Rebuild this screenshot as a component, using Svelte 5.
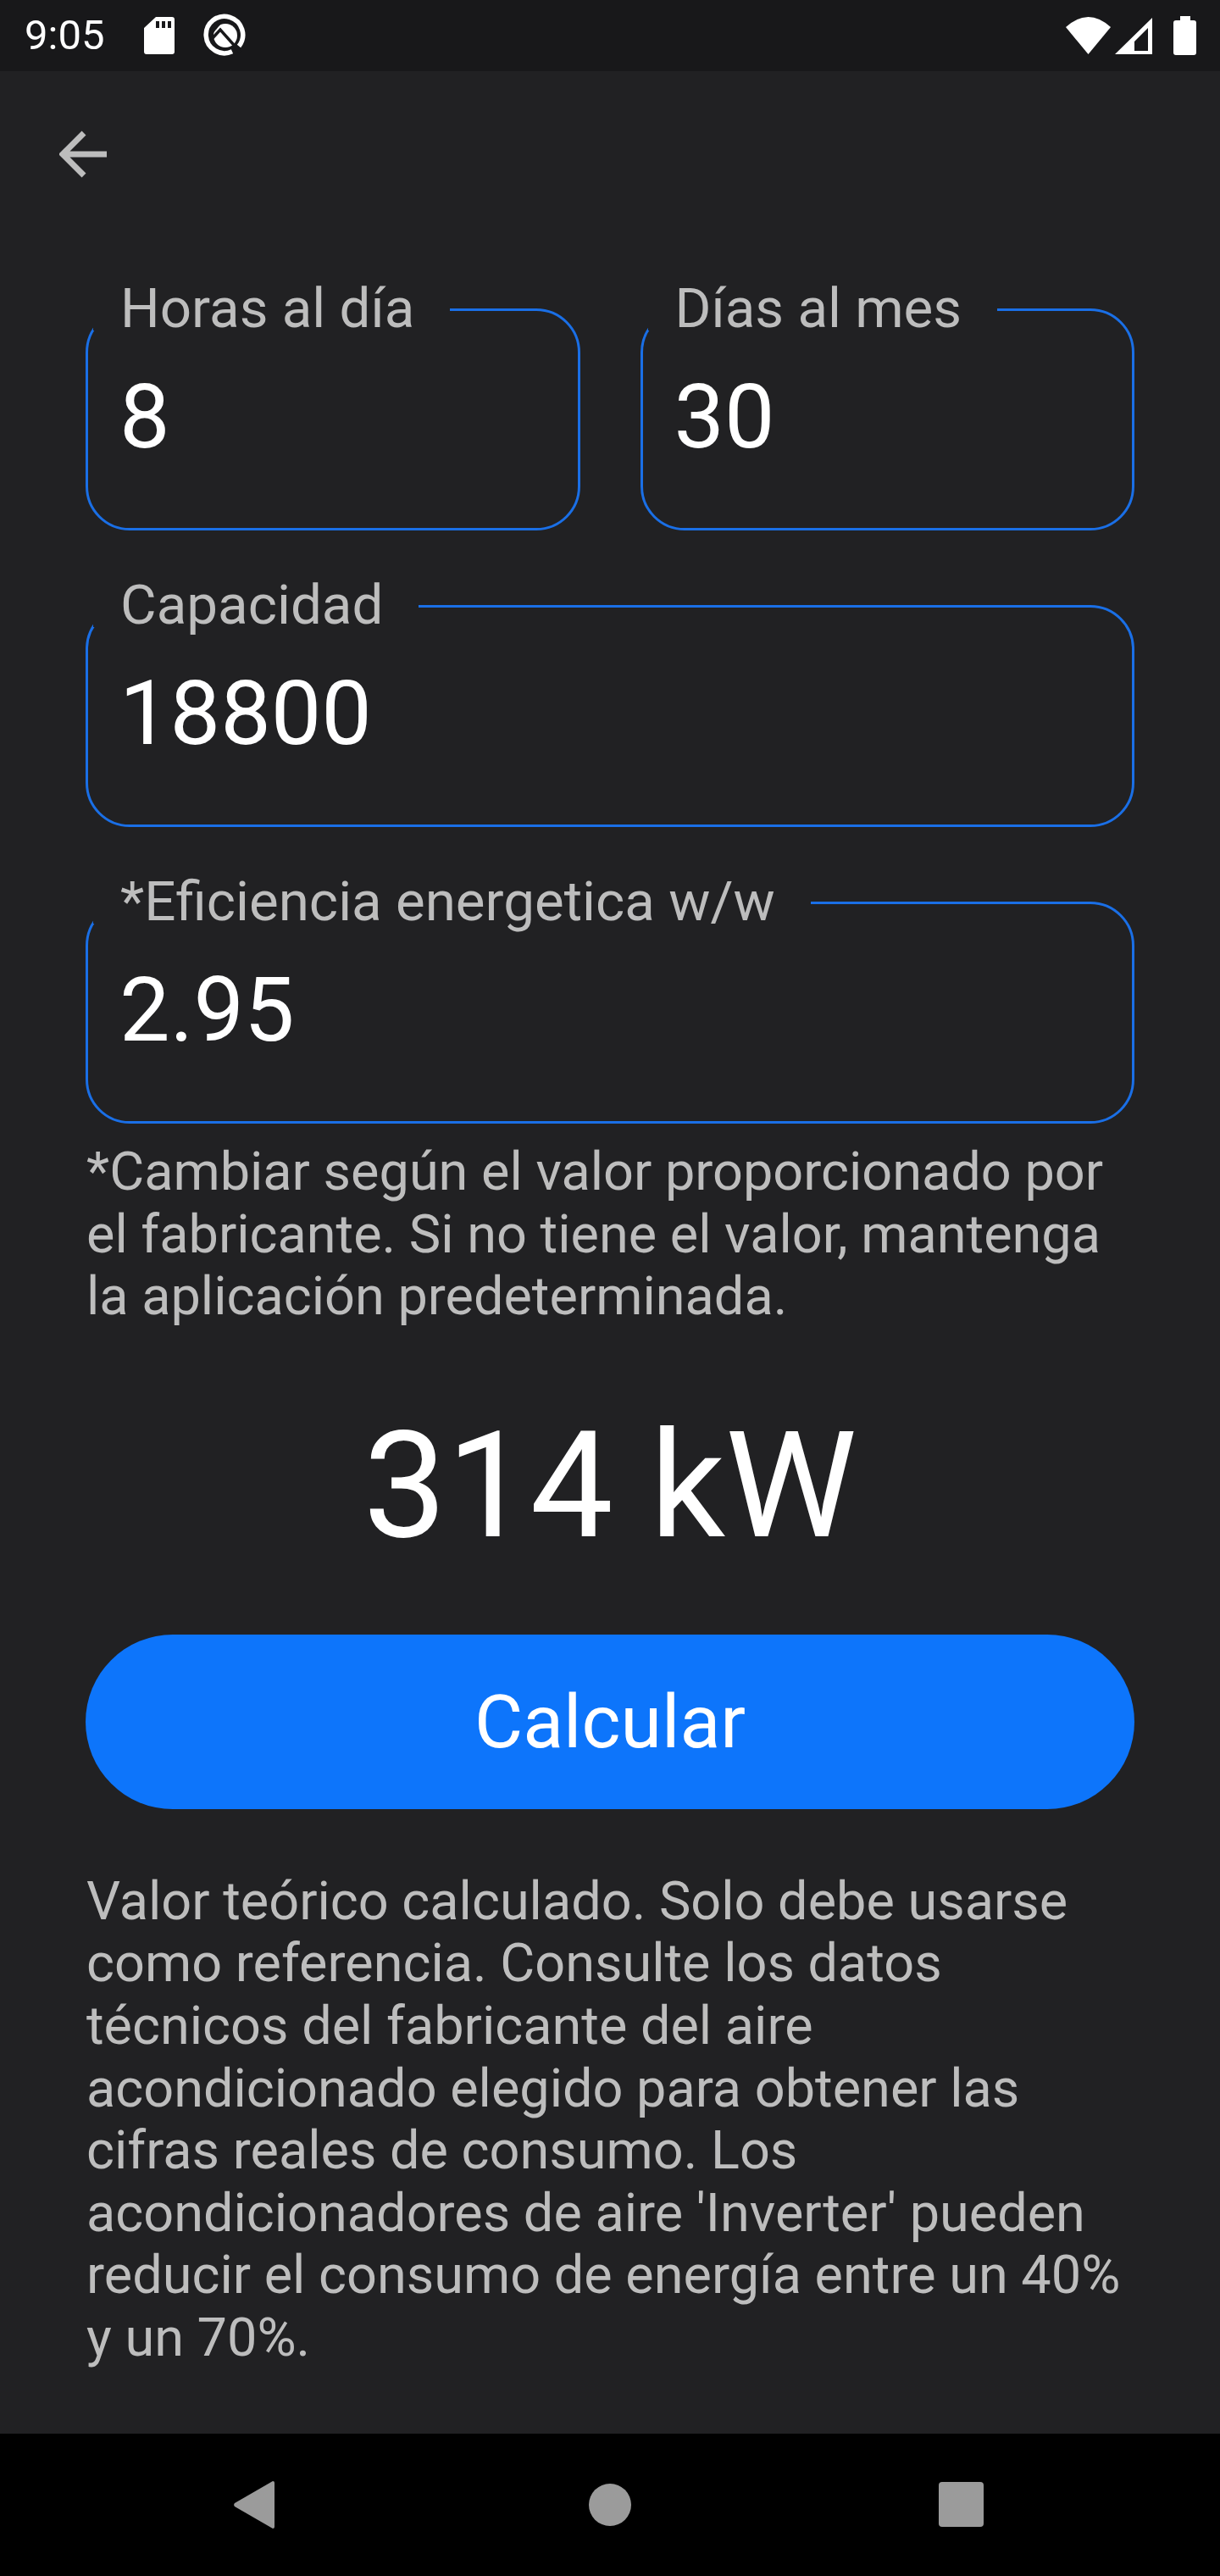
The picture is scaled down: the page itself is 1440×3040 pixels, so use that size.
<script>
	const note =
		'*Cambiar según el valor proporcionado por el fabricante. Si no tiene el valor, mantenga la aplicación predeterminada.';
	const disclaimer =
		"Valor teórico calculado. Solo debe usarse como referencia. Consulte los datos técnicos del fabricante del aire acondicionado elegido para obtener las cifras reales de consumo. Los acondicionadores de aire 'Inverter' pueden reducir el consumo de energía entre un 40% y un 70%.";
</script>

<div class="screen">
	<header class="status">
		<span class="time">9:05</span>
		<svg class="ic-sd" viewBox="0 0 36 44" aria-hidden="true">
			<path
				fill="#fff"
				fill-rule="evenodd"
				d="M14 0H33a3 3 0 0 1 3 3V41a3 3 0 0 1-3 3H3a3 3 0 0 1-3-3V13ZM14 5V13H18V5ZM21 5V13H25V5ZM28 5V13H32V5Z"
			/>
		</svg>
		<svg class="ic-q" viewBox="0 0 50 50" aria-hidden="true">
			<circle cx="26" cy="26" r="14" fill="#fff" />
			<path fill="#18181a" d="M5 31 20 13 9 7Z" />
			<path
				fill="none"
				stroke="#18181a"
				stroke-width="3.5"
				d="M10 30 20 19 44 46"
			/>
			<path
				fill="none"
				stroke="#fff"
				stroke-width="5.5"
				d="M34 44.8A21.75 21.75 0 1 1 42 38.5"
			/>
		</svg>
		<span class="grow"></span>
		<svg class="ic-wifi" viewBox="0 0 53 44" aria-hidden="true">
			<path fill="#fff" d="M0 12Q26.5-12 53 12L26.5 44Z" />
		</svg>
		<svg class="ic-signal" viewBox="0 0 44 43" aria-hidden="true">
			<path fill="#fff" fill-rule="evenodd" d="M44 0V43H0ZM39 12 23 28V39H39Z" />
		</svg>
		<svg class="ic-battery" viewBox="0 0 27 46" aria-hidden="true">
			<path
				fill="#fff"
				d="M8 0H20V5H24a3 3 0 0 1 3 3V43a3 3 0 0 1-3 3H3a3 3 0 0 1-3-3V8a3 3 0 0 1 3-3H8Z"
			/>
		</svg>
	</header>

	<main class="content">
		<button class="back" aria-label="Volver">
			<svg viewBox="0 0 56 56" aria-hidden="true">
				<path
					fill="none"
					stroke="#bdbdbd"
					stroke-width="7"
					d="M56 28H5M29 3 4 28l25 25"
				/>
			</svg>
		</button>

		<form class="form">
			<div class="row">
				<fieldset class="field">
					<legend>Horas al día</legend>
					<div class="value">8</div>
				</fieldset>
				<fieldset class="field">
					<legend>Días al mes</legend>
					<div class="value">30</div>
				</fieldset>
			</div>
			<fieldset class="field">
				<legend>Capacidad</legend>
				<div class="value">18800</div>
			</fieldset>
			<fieldset class="field">
				<legend>*Eficiencia energetica w/w</legend>
				<div class="value">2.95</div>
			</fieldset>
		</form>

		<p class="note">{note}</p>
		<div class="result">314 kW</div>
		<button class="calc">Calcular</button>
		<p class="note disclaimer">{disclaimer}</p>
	</main>

	<nav class="nav">
		<svg class="nav-back" viewBox="0 0 48 56" aria-hidden="true">
			<path fill="#9b9b9b" d="M46 0a2 2 0 0 1 2 2V54a2 2 0 0 1-2 2L1 30a3 3 0 0 1 0-4Z" />
		</svg>
		<span class="nav-home"></span>
		<span class="nav-recent"></span>
	</nav>
</div>

<style>
	:global(body) {
		margin: 0;
		background: #212123;
	}

	.screen {
		display: flex;
		flex-direction: column;
		width: 1440px;
		height: 3040px;
		font-family: Roboto, 'Liberation Sans', sans-serif;
		color: #fff;
		background: #212123;
	}

	.status {
		display: flex;
		flex: none;
		align-items: center;
		height: 84px;
		padding: 0 28px 0 29px;
		box-sizing: border-box;
		background: #18181a;
	}

	.time {
		width: 141px;
		font-size: 49px;
		line-height: 84px;
	}

	.ic-sd {
		width: 36px;
		height: 44px;
	}

	.ic-q {
		width: 50px;
		height: 50px;
		margin: 0 0 3px 34px;
	}

	.grow {
		flex: 1;
	}

	.ic-wifi {
		width: 53px;
		height: 44px;
	}

	.ic-signal {
		width: 44px;
		height: 43px;
		margin-left: 5px;
	}

	.ic-battery {
		width: 27px;
		height: 46px;
		margin-left: 25px;
	}

	.content {
		flex: 1;
		padding: 70px 101px 0;
	}

	.back {
		display: block;
		width: 56px;
		height: 56px;
		margin: 0 0 0 -31px;
		padding: 0;
		border: 0;
		background: none;
	}

	.back svg {
		display: block;
		width: 56px;
		height: 56px;
	}

	.form {
		display: flex;
		flex-direction: column;
		gap: 64px;
		margin-top: 130px;
	}

	.row {
		display: grid;
		grid-template-columns: 1fr 1fr;
		gap: 71px;
	}

	.field {
		min-width: 0;
		height: 286px;
		margin: 0;
		padding: 0;
		box-sizing: border-box;
		border: 3px solid #1a6fe6;
		border-radius: 52px;
	}

	legend {
		height: 50px;
		margin-left: 6px;
		padding: 0 42px 0 32px;
		font-size: 65.5px;
		line-height: 48px;
		color: #bdbdbd;
		white-space: nowrap;
	}

	.value {
		padding: 40px 37px 0;
		font-size: 106px;
		line-height: 124px;
	}

	.note {
		margin: 20px 0 0 1px;
		font-size: 63px;
		line-height: 73.6px;
		color: #bdbdbd;
	}

	.result {
		margin-top: 93px;
		font-size: 175px;
		line-height: 188px;
		text-align: center;
	}

	.calc {
		display: block;
		width: 100%;
		height: 206px;
		margin-top: 81px;
		padding: 0;
		border: 0;
		border-radius: 103px;
		font-family: inherit;
		font-size: 88px;
		color: #fff;
		background: #0d75fb;
	}

	.disclaimer {
		margin-top: 72px;
	}

	.nav {
		position: relative;
		flex: none;
		height: 168px;
		background: #000;
	}

	.nav-back {
		position: absolute;
		left: 276px;
		top: 56px;
		width: 48px;
		height: 56px;
	}

	.nav-home {
		position: absolute;
		left: 695px;
		top: 59px;
		width: 50px;
		height: 50px;
		border-radius: 50%;
		background: #9b9b9b;
	}

	.nav-recent {
		position: absolute;
		left: 1108px;
		top: 57px;
		width: 53px;
		height: 53px;
		border-radius: 4px;
		background: #9b9b9b;
	}
</style>
